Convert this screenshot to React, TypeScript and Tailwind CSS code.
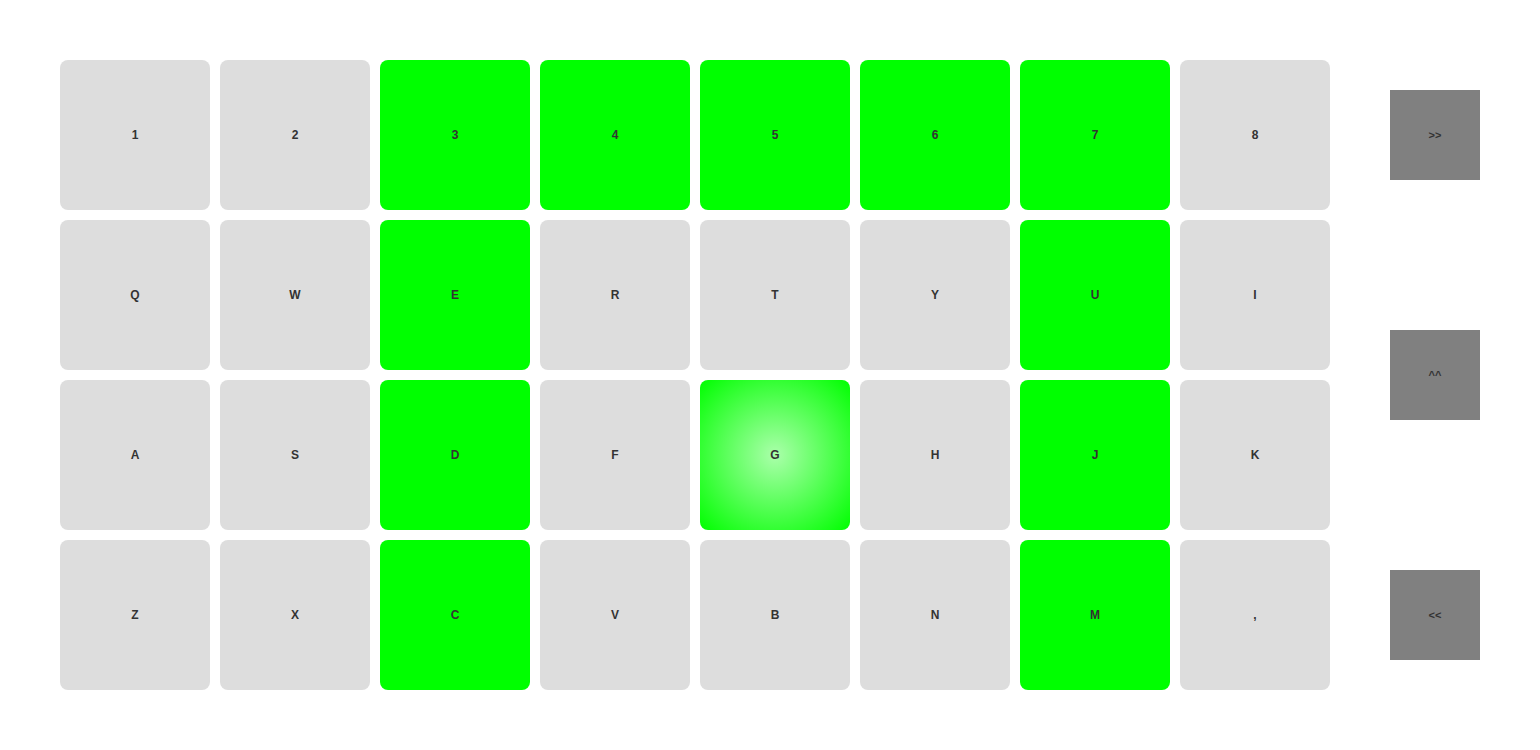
const ROWS: string[][] = [
  ['1', '2', '3', '4', '5', '6', '7', '8'],
  ['Q', 'W', 'E', 'R', 'T', 'Y', 'U', 'I'],
  ['A', 'S', 'D', 'F', 'G', 'H', 'J', 'K'],
  ['Z', 'X', 'C', 'V', 'B', 'N', 'M', ','],
]

// keys lit green
const LIT = new Set(['3', '4', '5', '6', '7', 'E', 'U', 'D', 'J', 'C', 'M'])
const PRESSED = 'G'

function Pad({ label }: { label: string }) {
  let tone = 'bg-[#dddddd]'
  if (LIT.has(label)) tone = 'bg-[#00ff00]'
  if (label === PRESSED) tone = 'bg-[radial-gradient(#aaffaa,#00ff00)]'
  return (
    <div className={`flex h-[150px] w-[150px] items-center justify-center rounded-lg text-[12px] font-bold text-[#333333] ${tone}`}>
      {label}
    </div>
  )
}

function SideButton({ label }: { label: string }) {
  return (
    <div className="flex h-[90px] w-[90px] items-center justify-center bg-[#808080] text-[11px] font-bold text-[#333333]">
      {label}
    </div>
  )
}

export default function App() {
  return (
    <div className="flex h-[750px] w-[1540px] gap-[60px] bg-white p-[60px] font-['Liberation_Sans',Arial,sans-serif]">
      <div className="grid grid-cols-[repeat(8,150px)] gap-[10px]">
        {ROWS.flat().map((k, i) => (
          <Pad key={i} label={k} />
        ))}
      </div>
      <div className="flex h-[630px] flex-col justify-between py-[30px]">
        <SideButton label=">>" />
        <SideButton label="^^" />
        <SideButton label="<<" />
      </div>
    </div>
  )
}
